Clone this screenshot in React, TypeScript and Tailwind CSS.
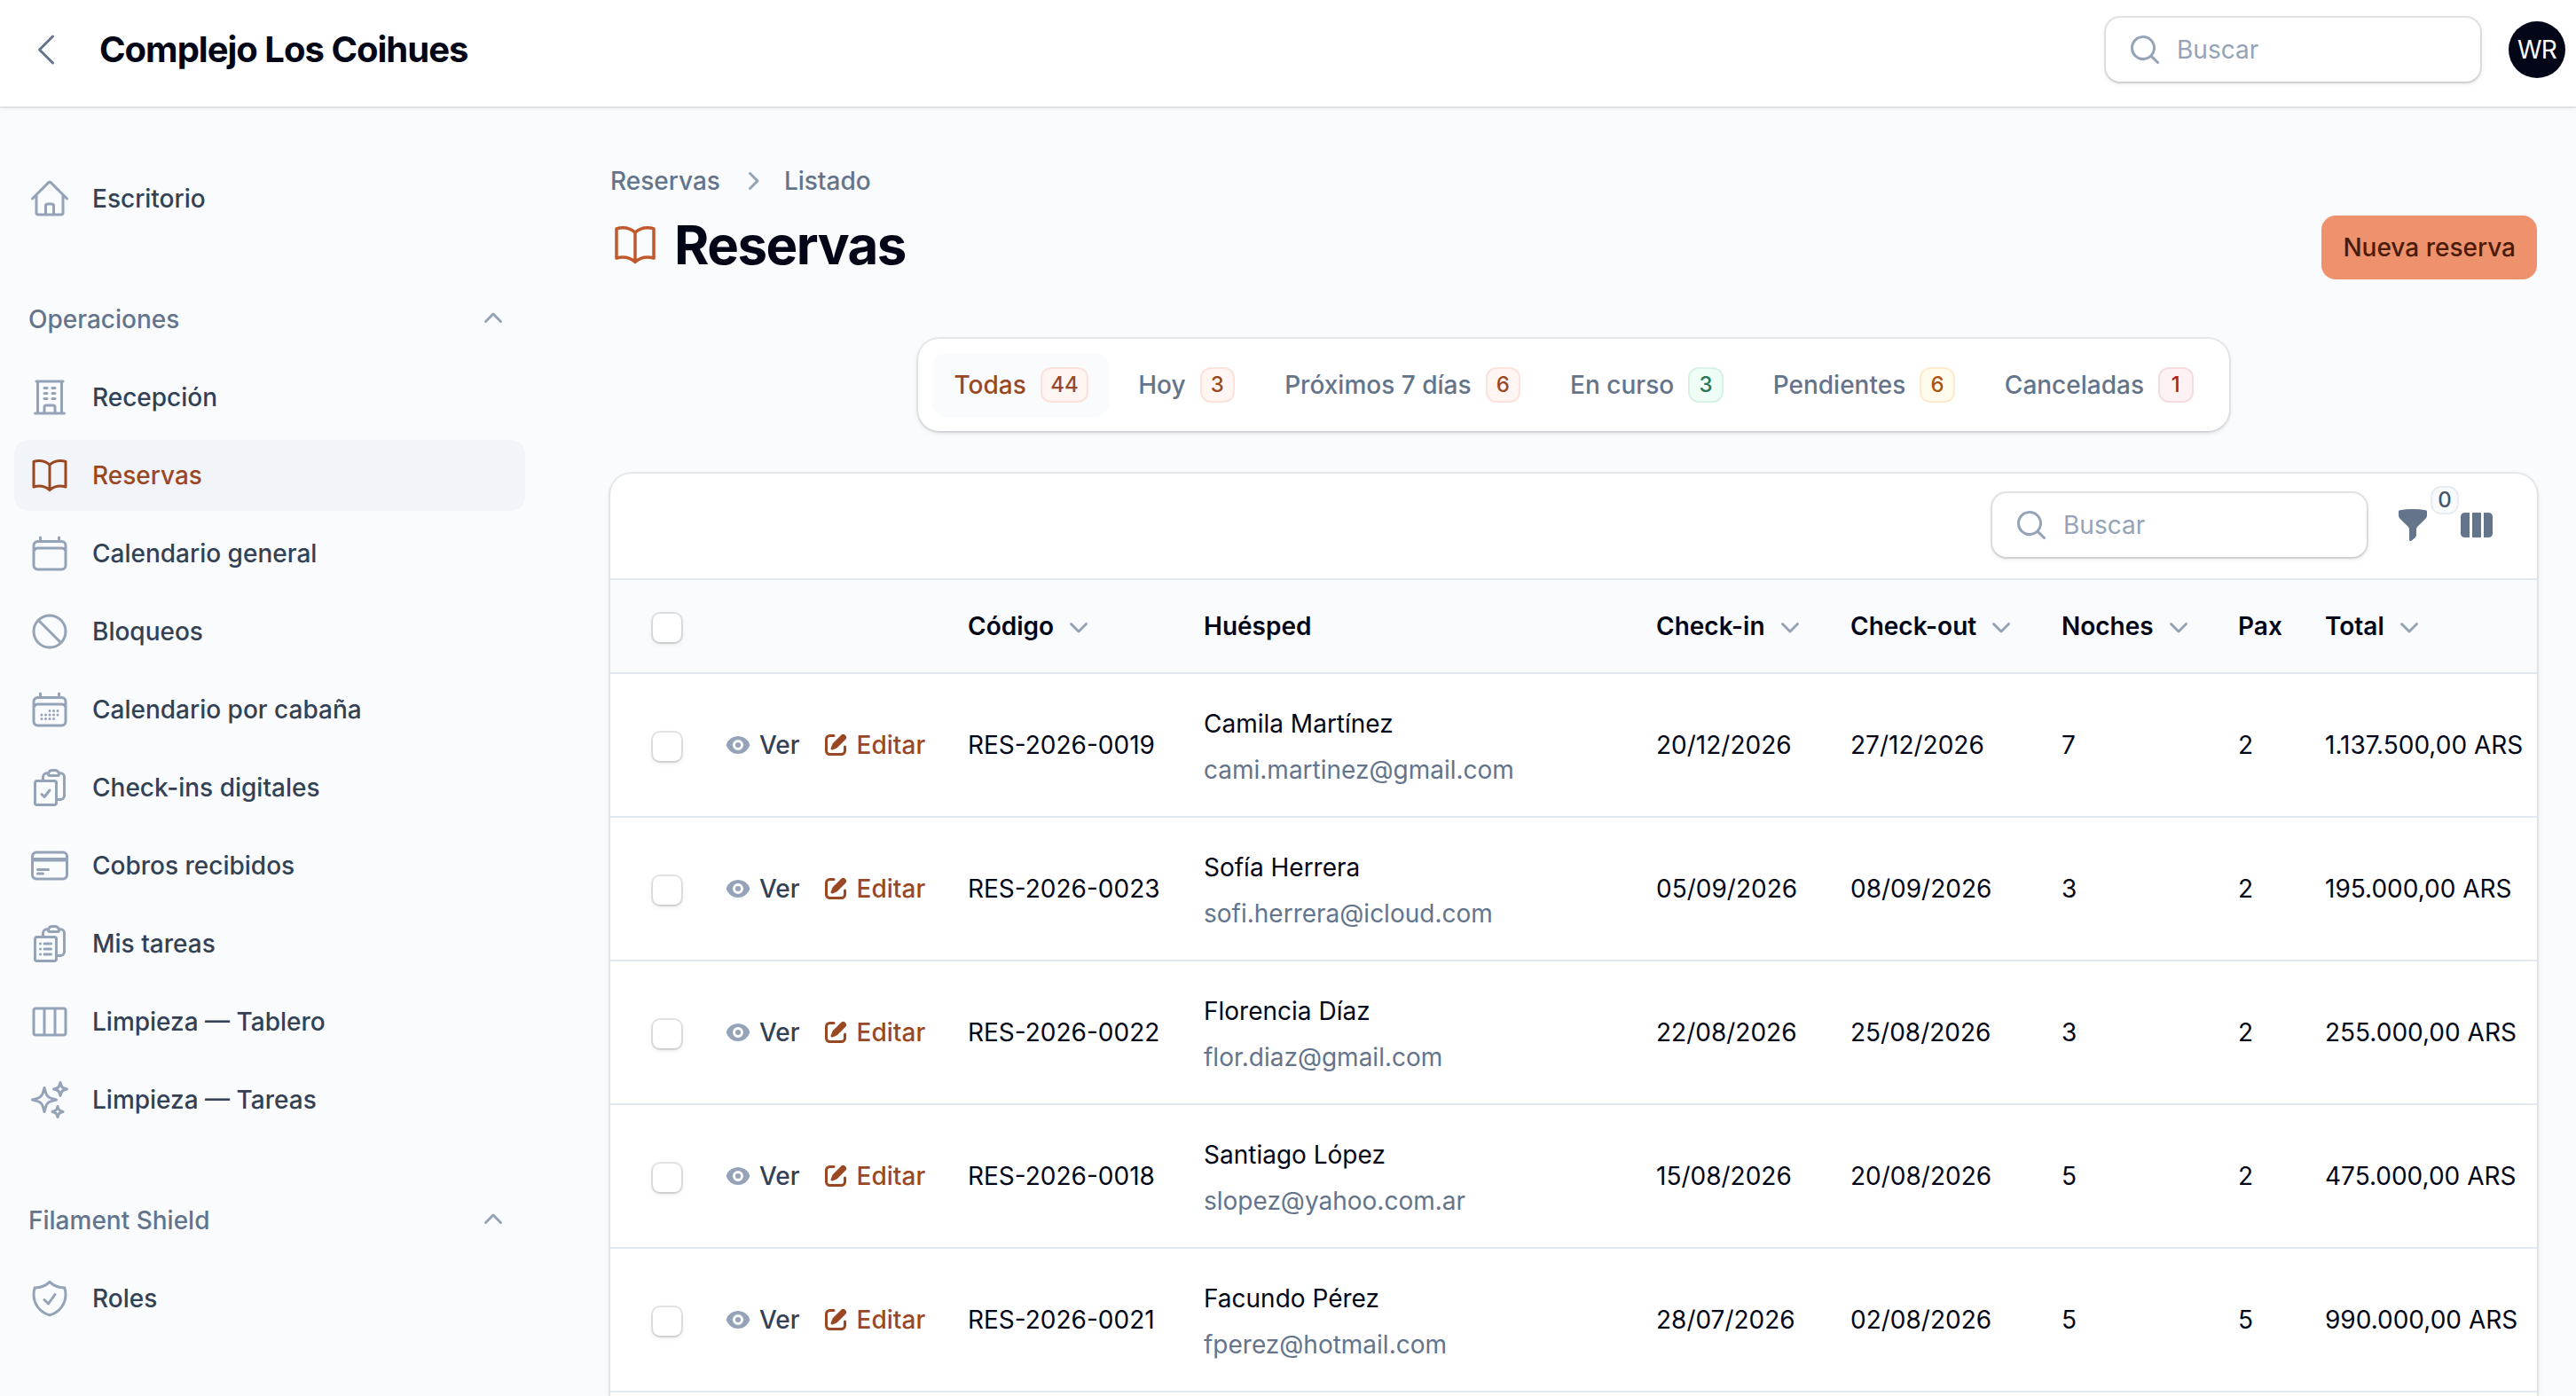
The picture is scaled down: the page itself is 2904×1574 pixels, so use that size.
import React from "react";
import {
  HiMiniChevronDown,
  HiMiniChevronRight,
  HiMiniChevronUp,
  HiMiniFunnel,
  HiMiniMagnifyingGlass,
  HiMiniViewColumns,
  HiOutlineBookOpen,
  HiOutlineBuildingOffice,
  HiOutlineCalendar,
  HiOutlineCalendarDays,
  HiOutlineChevronLeft,
  HiOutlineClipboardDocumentCheck,
  HiOutlineClipboardDocumentList,
  HiOutlineCreditCard,
  HiOutlineHome,
  HiOutlineNoSymbol,
  HiOutlineShieldCheck,
  HiOutlineSparkles,
  HiOutlineViewColumns,
} from "react-icons/hi2";

const operaciones = [
  { label: "Recepción", icon: HiOutlineBuildingOffice },
  { label: "Reservas", icon: HiOutlineBookOpen, active: true },
  { label: "Calendario general", icon: HiOutlineCalendar },
  { label: "Bloqueos", icon: HiOutlineNoSymbol },
  { label: "Calendario por cabaña", icon: HiOutlineCalendarDays },
  { label: "Check-ins digitales", icon: HiOutlineClipboardDocumentCheck },
  { label: "Cobros recibidos", icon: HiOutlineCreditCard },
  { label: "Mis tareas", icon: HiOutlineClipboardDocumentList },
  { label: "Limpieza — Tablero", icon: HiOutlineViewColumns },
  { label: "Limpieza — Tareas", icon: HiOutlineSparkles },
];

const primaryBadge = "bg-[#fff5f2] text-[#9a4824] ring-[#fbe3dc]";

const tabs = [
  { label: "Todas", count: 44, badge: primaryBadge, active: true },
  { label: "Hoy", count: 3, badge: primaryBadge },
  { label: "Próximos 7 días", count: 6, badge: primaryBadge },
  { label: "En curso", count: 3, badge: "bg-[#effdf7] text-[#2a7553] ring-[#d9f1e6]" },
  { label: "Pendientes", count: 6, badge: "bg-[#fffbec] text-[#a9540f] ring-[#fcebcf]" },
  { label: "Canceladas", count: 1, badge: "bg-[#fdf2f3] text-[#b3221f] ring-[#f6dcde]" },
];

const columns = [
  { label: "Código", width: "w-[266px]", sortable: true },
  { label: "Huésped", width: "w-[510px]" },
  { label: "Check-in", width: "w-[219px]", sortable: true },
  { label: "Check-out", width: "w-[238px]", sortable: true },
  { label: "Noches", width: "w-[199px]", sortable: true },
  { label: "Pax", width: "w-[98px]" },
  { label: "Total", width: "w-[263px]", sortable: true },
];

const bookings = [
  { code: "RES-2026-0019", guest: "Camila Martínez", email: "cami.martinez@gmail.com", checkIn: "20/12/2026", checkOut: "27/12/2026", nights: 7, pax: 2, total: "1.137.500,00 ARS" },
  { code: "RES-2026-0023", guest: "Sofía Herrera", email: "sofi.herrera@icloud.com", checkIn: "05/09/2026", checkOut: "08/09/2026", nights: 3, pax: 2, total: "195.000,00 ARS" },
  { code: "RES-2026-0022", guest: "Florencia Díaz", email: "flor.diaz@gmail.com", checkIn: "22/08/2026", checkOut: "25/08/2026", nights: 3, pax: 2, total: "255.000,00 ARS" },
  { code: "RES-2026-0018", guest: "Santiago López", email: "slopez@yahoo.com.ar", checkIn: "15/08/2026", checkOut: "20/08/2026", nights: 5, pax: 2, total: "475.000,00 ARS" },
  { code: "RES-2026-0021", guest: "Facundo Pérez", email: "fperez@hotmail.com", checkIn: "28/07/2026", checkOut: "02/08/2026", nights: 5, pax: 5, total: "990.000,00 ARS" },
];

// 16px icons, not part of react-icons/hi2
const EyeIcon = () => (
  <svg viewBox="0 0 16 16" fill="currentColor" className="size-8 text-[#94a3b8]">
    <path d="M8 9.5a1.5 1.5 0 1 0 0-3 1.5 1.5 0 0 0 0 3Z" />
    <path
      fillRule="evenodd"
      clipRule="evenodd"
      d="M1.38 8.28a.87.87 0 0 1 0-.566 7.003 7.003 0 0 1 13.238.006.87.87 0 0 1 0 .566A7.003 7.003 0 0 1 1.379 8.28ZM11 8a3 3 0 1 1-6 0 3 3 0 0 1 6 0Z"
    />
  </svg>
);

const PencilIcon = () => (
  <svg viewBox="0 0 16 16" fill="currentColor" className="size-8">
    <path d="M13.488 2.513a1.75 1.75 0 0 0-2.475 0L6.75 6.774a2.75 2.75 0 0 0-.596.892l-.848 2.047a.75.75 0 0 0 .98.98l2.047-.848a2.75 2.75 0 0 0 .892-.596l4.261-4.262a1.75 1.75 0 0 0 0-2.474Z" />
    <path d="M4.75 3.5c-.69 0-1.25.56-1.25 1.25v6.5c0 .69.56 1.25 1.25 1.25h6.5c.69 0 1.25-.56 1.25-1.25V9A.75.75 0 0 1 14 9v2.25A2.75 2.75 0 0 1 11.25 14h-6.5A2.75 2.75 0 0 1 2 11.25v-6.5A2.75 2.75 0 0 1 4.75 2H7a.75.75 0 0 1 0 1.5H4.75Z" />
  </svg>
);

const SearchBox = () => (
  <div className="flex h-[72px] w-[422px] items-center gap-4 rounded-2xl bg-white px-6 shadow-[0_0_0_2px_rgba(2,6,23,0.1),0_2px_6px_rgba(0,0,0,0.1),0_2px_4px_-2px_rgba(0,0,0,0.1)]">
    <HiMiniMagnifyingGlass className="size-10 shrink-0 text-[#94a3b8]" />
    <span className="text-[#94a3b8]">Buscar</span>
  </div>
);

const Checkbox = () => (
  <div className="mt-1 size-8 rounded-lg bg-white shadow-[0_0_0_2px_rgba(2,6,23,0.1),0_2px_6px_rgba(0,0,0,0.1),0_2px_4px_-2px_rgba(0,0,0,0.1)]" />
);

const NavItem = ({ label, icon: Icon, active }: { label: string; icon: React.ElementType; active?: boolean }) => (
  <li
    className={`flex h-20 items-center gap-6 rounded-2xl px-4 font-medium ${
      active ? "bg-[#f1f4f9] text-[#9a4824]" : "text-[#334155]"
    }`}
  >
    <Icon className={`size-12 shrink-0 ${active ? "text-[#9a4824]" : "text-[#94a3b8]"}`} />
    <span>{label}</span>
  </li>
);

const NavGroup = ({ label, children }: { label: string; children: React.ReactNode }) => (
  <div className="flex flex-col gap-2">
    <div className="flex h-20 items-center justify-between px-4 font-medium text-[#64748b]">
      <span>{label}</span>
      <HiMiniChevronUp className="size-10 text-[#94a3b8]" />
    </div>
    <ul className="flex flex-col gap-2">{children}</ul>
  </div>
);

const App = () => {
  return (
    <div className="flex h-[1574px] w-[2904px] flex-col overflow-hidden bg-[#f9fbfd] font-['Inter',sans-serif] text-[28px] leading-[40px] text-[#020617]">
      {/* Topbar */}
      <header className="flex h-[120px] shrink-0 items-center bg-white pr-3 pb-2 pl-7 shadow-[0_0_0_2px_rgba(2,6,23,0.07),0_2px_6px_rgba(0,0,0,0.06)]">
        <HiOutlineChevronLeft className="size-12 text-[#64748b]" />
        <span className="ml-9 text-[40px] font-bold tracking-tight">Complejo Los Coihues</span>
        <div className="ml-auto flex items-center gap-8">
          <SearchBox />
          <div className="flex size-16 items-center justify-center rounded-full bg-[#020617] text-white">
            <span className="tracking-tight">WR</span>
          </div>
        </div>
      </header>

      <div className="flex min-h-0 flex-1">
        {/* Sidebar */}
        <aside className="flex w-[592px] shrink-0 flex-col gap-14 pt-16 pl-4">
          <ul>
            <NavItem label="Escritorio" icon={HiOutlineHome} />
          </ul>
          <NavGroup label="Operaciones">
            {operaciones.map((item) => (
              <NavItem key={item.label} {...item} />
            ))}
          </NavGroup>
          <NavGroup label="Filament Shield">
            <NavItem label="Roles" icon={HiOutlineShieldCheck} />
          </NavGroup>
        </aside>

        <main className="flex flex-1 flex-col pt-16 pr-11 pl-24">
          {/* Page heading */}
          <div className="flex items-start justify-between">
            <div>
              <nav className="flex items-center gap-4 font-medium text-[#64748b]">
                <span>Reservas</span>
                <HiMiniChevronRight className="size-10 text-[#94a3b8]" />
                <span>Listado</span>
              </nav>
              <h1 className="mt-4 flex items-center gap-4 text-[60px] leading-[72px] font-bold tracking-tight">
                <HiOutlineBookOpen className="size-14 text-[#c0592c]" />
                Reservas
              </h1>
            </div>
            <button className="mt-[59px] h-[72px] rounded-2xl bg-[#ee926d] px-6 font-medium text-[#4a1b09]">
              Nueva reserva
            </button>
          </div>

          {/* Tabs */}
          <div className="mx-auto mt-[67px] flex gap-2 rounded-3xl bg-white p-4 shadow-[0_0_0_2px_rgba(2,6,23,0.06),0_2px_6px_rgba(0,0,0,0.1),0_2px_4px_-2px_rgba(0,0,0,0.1)]">
            {tabs.map((tab) => (
              <div
                key={tab.label}
                className={`flex h-[72px] items-center gap-4 rounded-2xl px-6 font-medium ${
                  tab.active ? "bg-[#f9fbfd] text-[#9a4824]" : "text-[#64748b]"
                }`}
              >
                <span>{tab.label}</span>
                <span
                  className={`flex h-10 min-w-[39.6px] items-center justify-center rounded-xl px-[11.5px] text-2xl ring-2 ring-inset ${tab.badge}`}
                >
                  {tab.count}
                </span>
              </div>
            ))}
          </div>

          {/* Table */}
          <div className="mt-12 flex-1 overflow-hidden rounded-t-3xl bg-white shadow-[0_0_0_2px_rgba(2,6,23,0.06),0_2px_6px_rgba(0,0,0,0.1)]">
            <div className="flex h-[120px] items-start justify-end gap-8 border-b-2 border-[#e2e8f0] px-12 pt-[22px]">
              <SearchBox />
              <div className="relative mt-4">
                <HiMiniFunnel className="size-10 text-[#64748b]" />
                <span className="absolute -top-6 left-10 flex size-8 items-center justify-center rounded-xl bg-[#f8fafc] text-2xl font-medium text-[#475569] ring-2 ring-[#e9ecf1] ring-inset">
                  0
                </span>
              </div>
              <HiMiniViewColumns className="mt-4 size-10 text-[#64748b]" />
            </div>

            <table className="w-full table-fixed border-separate border-spacing-0 text-left whitespace-nowrap">
              <thead className="bg-[#f9fbfd]">
                <tr className="h-[106px]">
                  <th className="w-[104px] border-b-2 border-[#e2e8f0] py-0 pr-0 pl-12">
                    <Checkbox />
                  </th>
                  <th className="w-[275px] border-b-2 border-[#e2e8f0]"></th>
                  {columns.map((col) => (
                    <th key={col.label} className={`border-b-2 border-[#e2e8f0] px-6 py-0 font-semibold ${col.width}`}>
                      <div className="flex items-center gap-2">
                        {col.label}
                        {col.sortable && <HiMiniChevronDown className="size-10 shrink-0 text-[#94a3b8]" />}
                      </div>
                    </th>
                  ))}
                </tr>
              </thead>
              <tbody>
                {bookings.map((b) => (
                  <tr key={b.code} className="h-[162px] *:border-b-2 *:border-[#e2e8f0] *:py-0">
                    <td className="pl-12">
                      <Checkbox />
                    </td>
                    <td className="pl-6">
                      <div className="flex items-center gap-6 font-medium">
                        <span className="flex items-center gap-2 text-[#334155]">
                          <EyeIcon />
                          Ver
                        </span>
                        <span className="flex items-center gap-2 text-[#9a4824]">
                          <PencilIcon />
                          Editar
                        </span>
                      </div>
                    </td>
                    <td className="px-6">{b.code}</td>
                    <td className="px-6">
                      <p className="leading-[48px]">{b.guest}</p>
                      <p className="mt-2 text-[#64748b]">{b.email}</p>
                    </td>
                    <td className="px-6">{b.checkIn}</td>
                    <td className="px-6">{b.checkOut}</td>
                    <td className="px-6">{b.nights}</td>
                    <td className="px-6">{b.pax}</td>
                    <td className="pl-6">{b.total}</td>
                  </tr>
                ))}
              </tbody>
            </table>
          </div>
        </main>
      </div>
    </div>
  );
};

export default App;
